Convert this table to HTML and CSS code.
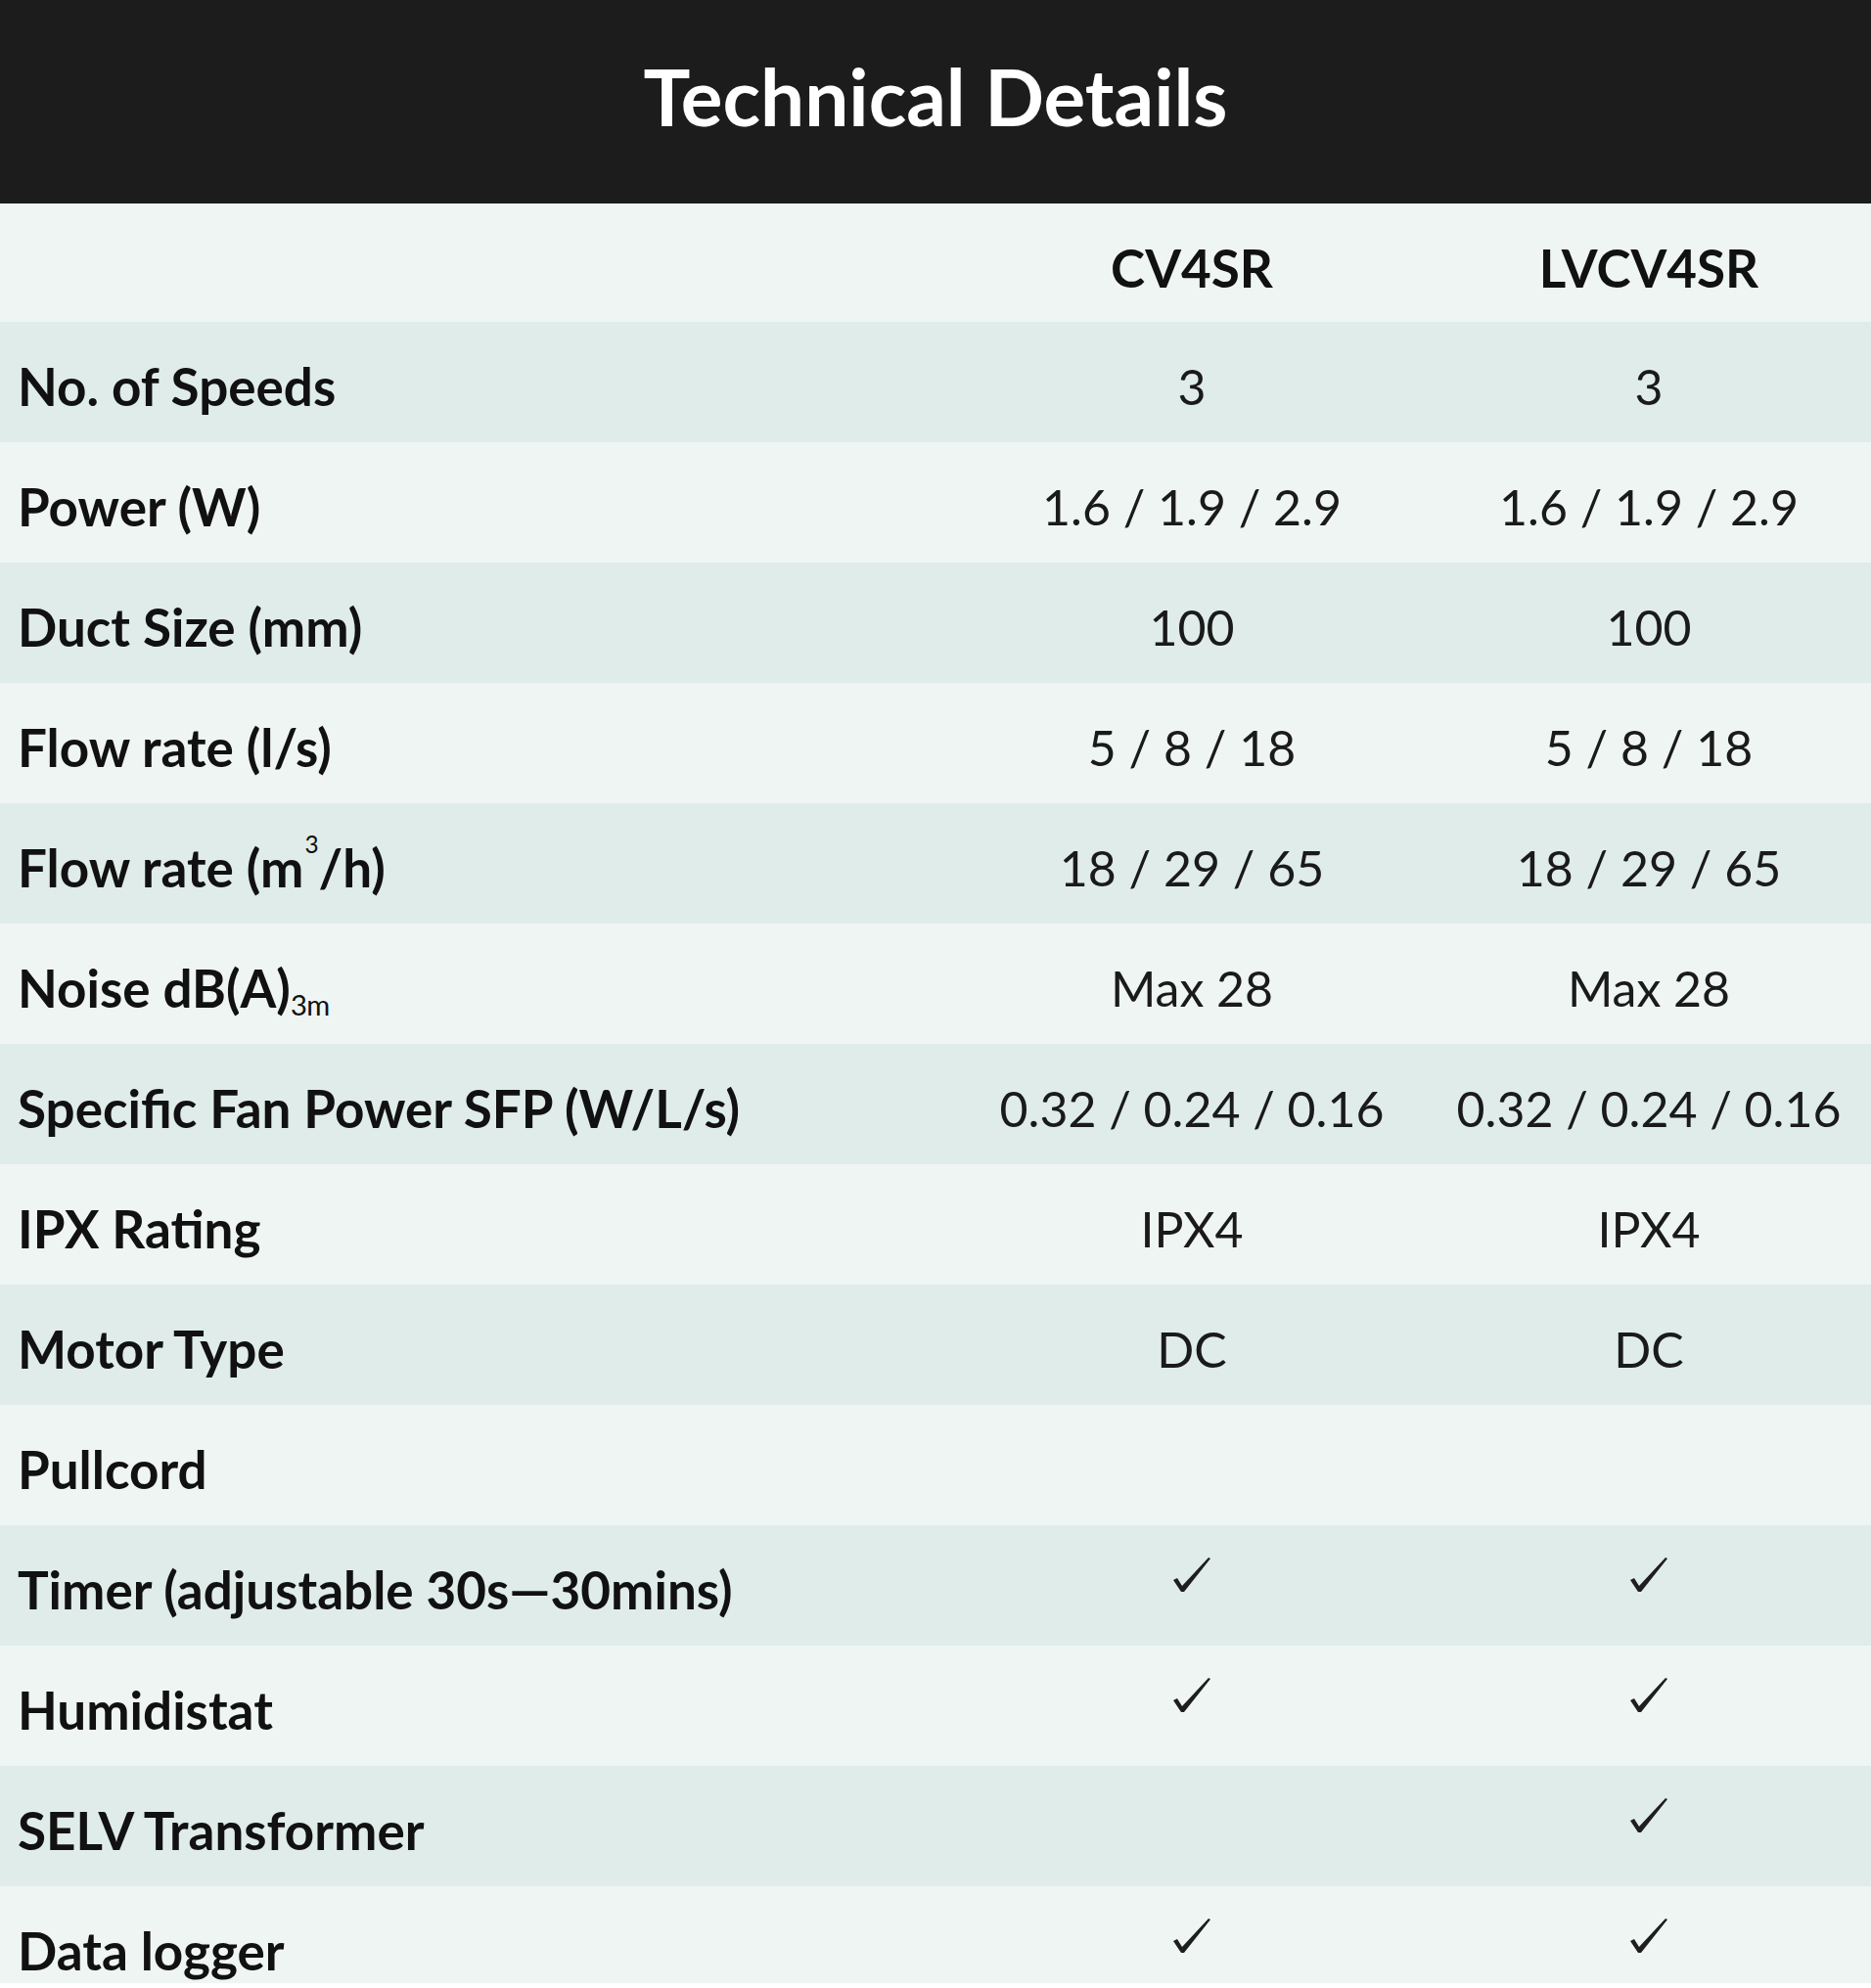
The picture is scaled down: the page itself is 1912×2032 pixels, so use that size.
FILE: index.html
```html
<!DOCTYPE html>
<html lang="en">
<head>
<meta charset="utf-8">
<title>Technical Details</title>
<link rel="stylesheet" href="styles.css">
</head>
<body>
<section class="specs">
  <header class="specs-head">
    <h1 class="specs-title">Technical Details</h1>
  </header>
  <div class="specs-table">
    <div class="row row-head">
      <div class="cell label"></div>
      <div class="cell model">CV4SR</div>
      <div class="cell model">LVCV4SR</div>
    </div>
    <div class="row">
      <div class="cell label">No. of Speeds</div>
      <div class="cell value">3</div>
      <div class="cell value">3</div>
    </div>
    <div class="row">
      <div class="cell label">Power (W)</div>
      <div class="cell value">1.6 / 1.9 / 2.9</div>
      <div class="cell value">1.6 / 1.9 / 2.9</div>
    </div>
    <div class="row">
      <div class="cell label">Duct Size (mm)</div>
      <div class="cell value">100</div>
      <div class="cell value">100</div>
    </div>
    <div class="row">
      <div class="cell label">Flow rate (l/s)</div>
      <div class="cell value">5 / 8 / 18</div>
      <div class="cell value">5 / 8 / 18</div>
    </div>
    <div class="row">
      <div class="cell label">Flow rate (m<sup class="sup">3</sup>/h)</div>
      <div class="cell value">18 / 29 / 65</div>
      <div class="cell value">18 / 29 / 65</div>
    </div>
    <div class="row">
      <div class="cell label">Noise dB(A)<sub class="sub">3m</sub></div>
      <div class="cell value">Max 28</div>
      <div class="cell value">Max 28</div>
    </div>
    <div class="row">
      <div class="cell label">Specific Fan Power SFP (W/L/s)</div>
      <div class="cell value">0.32 / 0.24 / 0.16</div>
      <div class="cell value">0.32 / 0.24 / 0.16</div>
    </div>
    <div class="row">
      <div class="cell label">IPX Rating</div>
      <div class="cell value">IPX4</div>
      <div class="cell value">IPX4</div>
    </div>
    <div class="row">
      <div class="cell label">Motor Type</div>
      <div class="cell value">DC</div>
      <div class="cell value">DC</div>
    </div>
    <div class="row">
      <div class="cell label">Pullcord</div>
      <div class="cell value"></div>
      <div class="cell value"></div>
    </div>
    <div class="row">
      <div class="cell label">Timer (adjustable 30s—30mins)</div>
      <div class="cell check"><svg class="tick" viewBox="0 0 38 35"><polygon points="0,23 4,21 9,29 36,0 38,1 11,35 8,35"/></svg></div>
      <div class="cell check"><svg class="tick" viewBox="0 0 38 35"><polygon points="0,23 4,21 9,29 36,0 38,1 11,35 8,35"/></svg></div>
    </div>
    <div class="row">
      <div class="cell label">Humidistat</div>
      <div class="cell check"><svg class="tick" viewBox="0 0 38 35"><polygon points="0,23 4,21 9,29 36,0 38,1 11,35 8,35"/></svg></div>
      <div class="cell check"><svg class="tick" viewBox="0 0 38 35"><polygon points="0,23 4,21 9,29 36,0 38,1 11,35 8,35"/></svg></div>
    </div>
    <div class="row">
      <div class="cell label">SELV Transformer</div>
      <div class="cell check"></div>
      <div class="cell check"><svg class="tick" viewBox="0 0 38 35"><polygon points="0,23 4,21 9,29 36,0 38,1 11,35 8,35"/></svg></div>
    </div>
    <div class="row row-last">
      <div class="cell label">Data logger</div>
      <div class="cell check"><svg class="tick" viewBox="0 0 38 35"><polygon points="0,23 4,21 9,29 36,0 38,1 11,35 8,35"/></svg></div>
      <div class="cell check"><svg class="tick" viewBox="0 0 38 35"><polygon points="0,23 4,21 9,29 36,0 38,1 11,35 8,35"/></svg></div>
    </div>
  </div>
</section>
</body>
</html>
```
FILE: styles.css
```css
html, body {
  margin: 0;
  padding: 0;
  background: #ffffff;
}

body {
  font-family: Lato, "Open Sans", sans-serif;
  color: #111111;
}

.specs-head {
  height: 208px;
  box-sizing: border-box;
  padding-top: 50px;
  background: #1c1c1c;
  text-align: center;
}

.specs-title {
  margin: 0;
  font-size: 80px;
  line-height: 1.2;
  font-weight: 700;
  color: #ffffff;
}

.specs-table {
  display: flex;
  flex-direction: column;
}

.row {
  display: grid;
  grid-template-columns: 978px 480px 454px;
  height: 123px;
  background: #eff5f3;
}

.row:nth-child(even) {
  background: #dfece9;
}

.row-head {
  height: 121px;
}

.row-last {
  height: 99px;
}

.cell {
  box-sizing: border-box;
  padding-top: 34px;
  white-space: nowrap;
}

.label {
  padding-left: 18px;
  font-size: 53px;
  line-height: 1.2;
  font-weight: 700;
}

.model {
  text-align: center;
  font-size: 53px;
  line-height: 1.2;
  font-weight: 700;
}

.value {
  padding-top: 36px;
  text-align: center;
  font-size: 50px;
  line-height: 1.2;
  font-weight: 400;
  color: #1a1a1a;
}

.check {
  padding-top: 33px;
  display: flex;
  justify-content: center;
}

.tick {
  display: block;
  width: 38px;
  height: 35px;
  fill: #1e1e1e;
}

.sup {
  font-size: 0.46em;
  font-weight: 400;
  vertical-align: 0;
  position: relative;
  top: -1.45em;
  line-height: 0;
  margin-left: 1px;
}

.sub {
  font-size: 0.55em;
  font-weight: 400;
  vertical-align: 0;
  position: relative;
  top: 0.28em;
  line-height: 0;
  letter-spacing: -0.5px;
}
```
